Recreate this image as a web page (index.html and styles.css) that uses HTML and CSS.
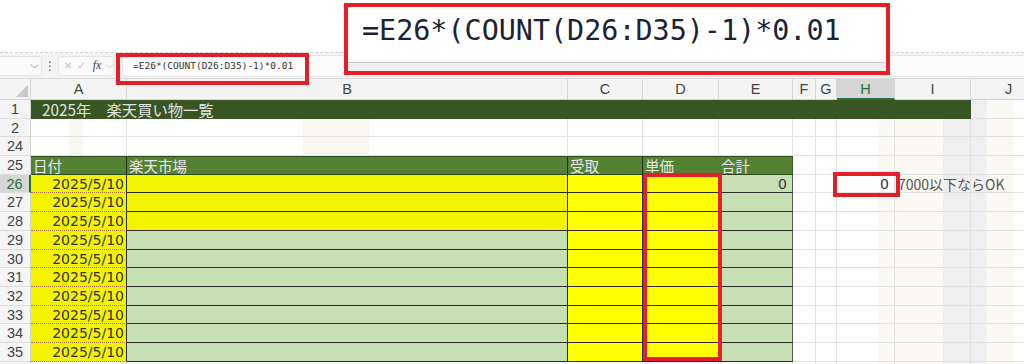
FILE: index.html
```html
<!DOCTYPE html>
<html lang="ja">
<head>
<meta charset="utf-8">
<link rel="stylesheet" href="styles.css">
</head>
<body>
<div class="app">
  <div class="topband"></div>
  <div class="fbar">
    <div class="namebox"><span class="chev">&#x2335;</span></div>
    <div class="vdots">&#x22EE;</div>
    <div class="btnbox">
      <span class="ico x">&#x2715;</span>
      <span class="ico ok">&#x2713;</span>
      <span class="fx">fx</span>
      <span class="chev2">&#x2335;</span>
    </div>
    <div class="finput"><span class="ftext">=E26*(COUNT(D26:D35)-1)*0.01</span></div>
  </div>

  <div class="sheet">
    <div class="corner"></div>
    <div class="ch">A</div><div class="ch">B</div><div class="ch">C</div><div class="ch">D</div><div class="ch">E</div><div class="ch">F</div><div class="ch">G</div><div class="ch sel">H</div><div class="ch">I</div><div class="ch">J</div>

    <div class="rh">1</div><div class="c title">2025年　楽天買い物一覧</div><div class="c"></div>

    <div class="rh">2</div><div class="c wm"></div><div class="c wm"></div><div class="c"></div><div class="c"></div><div class="c"></div><div class="c"></div><div class="c"></div><div class="c"></div><div class="c"></div><div class="c"></div>

    <div class="rh">24</div><div class="c wm"></div><div class="c wm"></div><div class="c"></div><div class="c"></div><div class="c"></div><div class="c"></div><div class="c"></div><div class="c"></div><div class="c"></div><div class="c"></div>

    <div class="rh">25</div><div class="c hd hda">日付</div><div class="c hd hdb">楽天市場</div><div class="c hd hdc">受取</div><div class="c hd hdd">単価</div><div class="c hd hde">合計</div><div class="c"></div><div class="c"></div><div class="c"></div><div class="c"></div><div class="c"></div>

    <div class="rh rsel">26</div><div class="c dt">2025/5/10</div><div class="c yb"></div><div class="c yc"></div><div class="c yd"></div><div class="c ge num">0</div><div class="c"></div><div class="c"></div><div class="c hcell num">0</div><div class="c note">7000以下ならOK</div><div class="c"></div>

    <div class="rh">27</div><div class="c dt">2025/5/10</div><div class="c yb"></div><div class="c yc"></div><div class="c yd"></div><div class="c ge"></div><div class="c"></div><div class="c"></div><div class="c"></div><div class="c"></div><div class="c"></div>

    <div class="rh">28</div><div class="c dt">2025/5/10</div><div class="c yb"></div><div class="c yc"></div><div class="c yd"></div><div class="c ge"></div><div class="c"></div><div class="c"></div><div class="c"></div><div class="c"></div><div class="c"></div>

    <div class="rh">29</div><div class="c dt">2025/5/10</div><div class="c gb"></div><div class="c yc"></div><div class="c yd"></div><div class="c ge"></div><div class="c"></div><div class="c"></div><div class="c"></div><div class="c"></div><div class="c"></div>

    <div class="rh">30</div><div class="c dt">2025/5/10</div><div class="c gb"></div><div class="c yc"></div><div class="c yd"></div><div class="c ge"></div><div class="c"></div><div class="c"></div><div class="c"></div><div class="c"></div><div class="c"></div>

    <div class="rh">31</div><div class="c dt">2025/5/10</div><div class="c gb"></div><div class="c yc"></div><div class="c yd"></div><div class="c ge"></div><div class="c"></div><div class="c"></div><div class="c"></div><div class="c"></div><div class="c"></div>

    <div class="rh">32</div><div class="c dt">2025/5/10</div><div class="c gb"></div><div class="c yc"></div><div class="c yd"></div><div class="c ge"></div><div class="c"></div><div class="c"></div><div class="c"></div><div class="c"></div><div class="c"></div>

    <div class="rh">33</div><div class="c dt">2025/5/10</div><div class="c gb"></div><div class="c yc"></div><div class="c yd"></div><div class="c ge"></div><div class="c"></div><div class="c"></div><div class="c"></div><div class="c"></div><div class="c"></div>

    <div class="rh">34</div><div class="c dt">2025/5/10</div><div class="c gb"></div><div class="c yc"></div><div class="c yd"></div><div class="c ge"></div><div class="c"></div><div class="c"></div><div class="c"></div><div class="c"></div><div class="c"></div>

    <div class="rh">35</div><div class="c dt">2025/5/10</div><div class="c gb"></div><div class="c yc"></div><div class="c yd"></div><div class="c ge"></div><div class="c"></div><div class="c"></div><div class="c"></div><div class="c"></div><div class="c"></div>

    <div class="rh"></div><div class="c"></div><div class="c"></div><div class="c"></div><div class="c"></div><div class="c"></div><div class="c"></div><div class="c"></div><div class="c"></div><div class="c"></div><div class="c"></div>
  </div>

  <div class="mark mark-formula"></div>
  <div class="mark mark-d"></div>
  <div class="mark mark-h"></div>

  <div class="zoombox">
    <div class="zoomtext">=E26*(COUNT(D26:D35)-1)*0.01</div>
    <div class="zoomstrip"></div>
  </div>
</div>
</body>
</html>
```

FILE: styles.css
```css
* { box-sizing: border-box; }
html, body { margin: 0; padding: 0; background: #fff; }
body { width: 1024px; height: 364px; overflow: hidden; font-family: "Noto Sans CJK JP", "DejaVu Sans", sans-serif; }

.app { position: relative; width: 1024px; height: 364px; overflow: hidden; }

.topband {
  height: 53px;
  background: #fff;
  border-bottom: 1px dashed #cfcfcf;
}

.fbar {
  height: 26px;
  background: #f3f3f3;
  border-bottom: 1px solid #dadada;
  display: flex;
  align-items: center;
  padding: 2px 0;
}
.namebox {
  width: 42px; height: 20px;
  background: #fafafa;
  border: 1px solid #e6e6e6;
  border-left: none;
  border-radius: 0 4px 4px 0;
  display: flex; align-items: center; justify-content: flex-end;
  padding-right: 3px;
}
.chev, .chev2 { font-size: 9px; color: #666; font-family: "DejaVu Sans", sans-serif; transform: scaleX(1.3); }
.vdots { width: 16px; text-align: center; color: #555; font-size: 12px; font-family: "DejaVu Sans", sans-serif; }
.btnbox {
  width: 56px; height: 20px;
  background: #fafafa;
  border: 1px solid #e6e6e6;
  border-radius: 4px;
  display: flex; align-items: center;
  padding-left: 5px; gap: 5px;
  margin-right: 8px;
}
.ico { font-size: 10px; color: #c4c4c4; font-family: "DejaVu Sans", sans-serif; }
.fx { font-family: "Liberation Serif", serif; font-style: italic; font-size: 12px; color: #444; margin-left: 2px; }
.chev2 { color: #bbb; }
.finput {
  flex: 1; height: 22px;
  background: #fcfcfc;
  border: 1px solid #e6e6e6;
  border-right: none;
  border-radius: 4px 0 0 4px;
  display: flex; align-items: center;
  padding-left: 10px;
}
.ftext { font-family: "DejaVu Sans Mono", monospace; font-size: 9.5px; color: #333; }

.sheet {
  display: grid;
  grid-template-columns: 31px 96px 441px 75px 76px 74px 23px 21px 58px 76px 76px;
  grid-template-rows: 21px;
  grid-auto-rows: 18.7px;
  width: 1047px;
  background:
    linear-gradient(to right, transparent 878px, #faf9f4 878px, #faf9f4 943px, #efefef 943px, #efefef 987px, #faf9f4 987px, #faf9f4 1014px, transparent 1014px);
}

.corner {
  background: #f4f4f4;
  border-right: 1px solid #d4d4d4;
  border-bottom: 1px solid #d4d4d4;
  position: relative;
}
.corner::after {
  content: "";
  position: absolute;
  right: 2px; bottom: 2px;
  width: 0; height: 0;
  border-left: 12px solid transparent;
  border-bottom: 12px solid #c9c9c9;
}
.ch {
  background: #f4f4f4;
  border-right: 1px solid #d8d8d8;
  border-bottom: 1px solid #d4d4d4;
  color: #444;
  font-family: "Liberation Sans", sans-serif;
  font-size: 14.5px;
  text-align: center;
  line-height: 21px;
}
.ch.sel { background: #d6d6d6; color: #217346; border-bottom: 2px solid #217346; }

.rh {
  background: #f4f4f4;
  border-right: 1px solid #d4d4d4;
  border-bottom: 1px solid #dedede;
  color: #444;
  font-family: "Liberation Sans", sans-serif;
  font-size: 14.5px;
  text-align: center;
  line-height: 18px;
}
.rh.rsel { background: #d6d6d6; color: #217346; border-right: 2px solid #217346; }

.c {
  border-right: 1px solid #e2e2e2;
  border-bottom: 1px solid #e2e2e2;
  font-size: 14.5px;
  line-height: 18px;
  white-space: nowrap;
  min-width: 0;
}
.wm {
  background: linear-gradient(to right, transparent 40%, #f7f6f1 40%, #f7f6f1 55%, transparent 55%);
}

.title {
  grid-column: span 9;
  background: #375623;
  border-right: none;
  border-bottom: 1px solid #375623;
  color: #e4e4e4;
  padding-left: 11px;
  font-size: 15.3px;
}

.hd {
  background: #548235;
  color: #e8e8e8;
  border-top: 1px solid #2c4a1a;
  border-bottom: 1px solid #2c4a1a;
  border-right: 1px solid #548235;
  padding-left: 2px;
  line-height: 17px;
}
.hda, .hdb, .hdc { border-right: 1px solid #1f3312; }
.hde { border-right: 1px solid #3a5a22; }

.dt {
  background: #f3f300;
  color: #333;
  font-family: "DejaVu Sans", sans-serif;
  font-size: 14px;
  text-align: right;
  padding-right: 2px;
  border-right: 1px solid #2a2a2a;
  border-bottom: 1px dotted #b06a3a;
}
.yb { background: #f3f300; border-right: 1px solid #2a2a2a; border-bottom: 1px solid #2a2a2a; }
.gb { background: #c6e0b4; border-right: 1px solid #2a2a2a; border-bottom: 1px solid #2a2a2a; }
.yc { background: #ffff00; border-right: 1px solid #2a2a2a; border-bottom: 1px solid #2a2a2a; }
.yd { background: #ffff00; border-right: 1px solid #2a2a2a; border-bottom: 1px solid #2a2a2a; }
.ge { background: #c6e0b4; border-right: 1px solid #555; border-bottom: 1px solid #2a2a2a; }

.num { text-align: right; padding-right: 5px; color: #333; font-family: "DejaVu Sans", sans-serif; font-size: 14px; }
.hcell { background: #fff; }
.note {
  overflow: visible;
  color: #555;
  font-size: 14px;
  padding-left: 3px;
}

.mark { position: absolute; border: 4px solid #e61e2a; pointer-events: none; }
.mark-formula { left: 116px; top: 53px; width: 193px; height: 32px; }
.mark-d { left: 643px; top: 173px; width: 79px; height: 188px; }
.mark-h { left: 833px; top: 172px; width: 67px; height: 25px; }

.zoombox {
  position: absolute;
  left: 344px; top: 3px;
  width: 546px; height: 72px;
  border: 4px solid #e61e2a;
  background: #fff;
  display: flex;
  flex-direction: column;
}
.zoomtext {
  flex: 1;
  font-family: "DejaVu Sans Mono", monospace;
  font-size: 28.4px;
  color: #1c2236;
  padding-left: 14px;
  padding-top: 7px;
  line-height: 33px;
}
.zoomstrip {
  height: 9px;
  background: #efefef;
  border-top: 1px solid #c9c9c9;
}
```
